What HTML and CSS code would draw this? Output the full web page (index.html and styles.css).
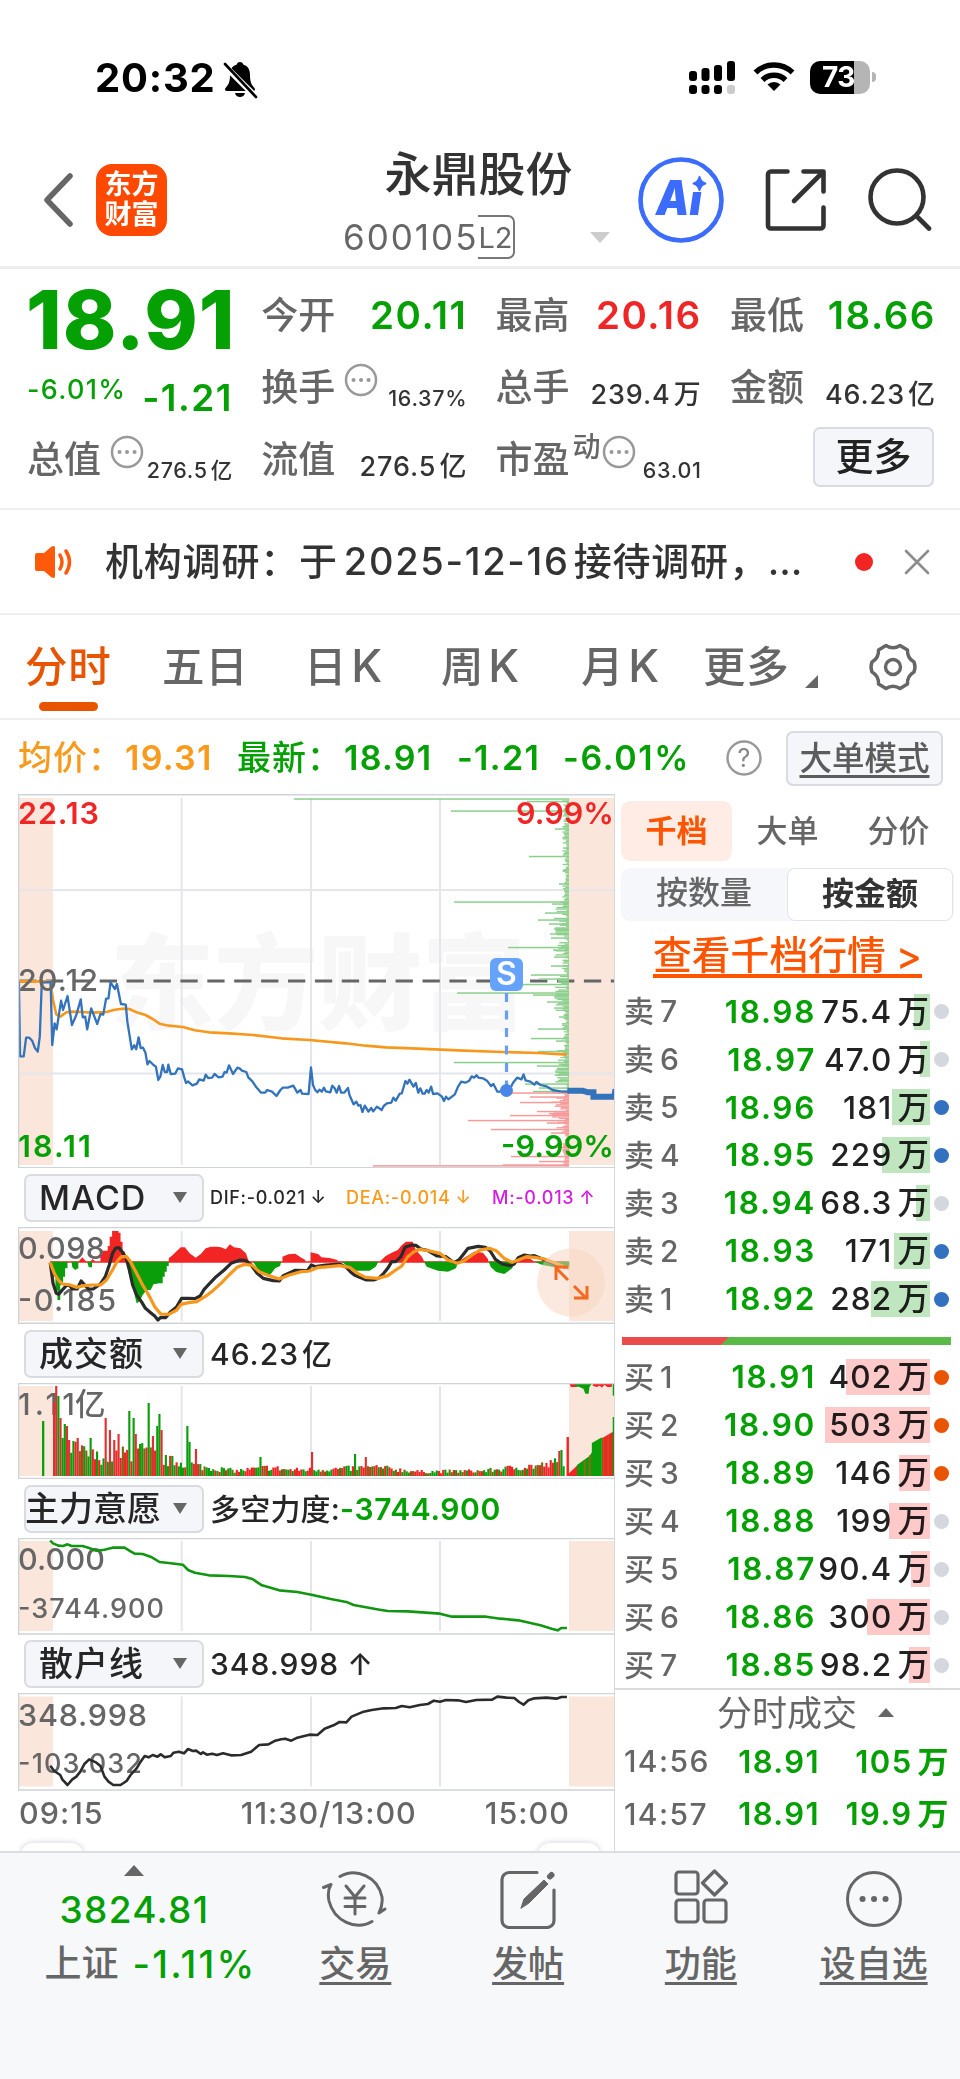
FILE: index.html
```html
<!DOCTYPE html>
<html lang="zh-CN">
<head>
<meta charset="utf-8">
<title>永鼎股份 600105</title>
<link rel="stylesheet" href="styles.css">
</head>
<body>
<div class="status">
  <span class="clock">20:32</span>
  <svg class="bell" width="36" height="38" viewBox="0 0 36 38"><path d="M18 1c-1.800 0-3 1-3.200 2.600C10 5 8 9 8 14c0 8-2 10-4.500 13-1 1.500-.5 3 1.500 3h26c2 0 2.500-1.500 1.500-3C30 24 28 22 28 14c0-5-2-9-6.800-10.400C21 2 19.800 1 18 1z"/><path d="M13 32h10c-.5 2.500-2.500 4-5 4s-4.500-1.500-5-4z"/><path d="M2 4l32 32" stroke="#fff" stroke-width="6"/><path d="M3 3l31 33" stroke="#000" stroke-width="2.600" stroke-linecap="round"/></svg>
  <svg class="signal" width="48" height="34" viewBox="0 0 48 34"><rect x="0" y="10" width="8" height="10" rx="3"/><rect x="12.500" y="7" width="8" height="13" rx="3"/><rect x="25" y="4" width="8" height="16" rx="3"/><rect x="38" y="0" width="8" height="20" rx="3"/><rect x="0" y="24" width="8" height="9" rx="3"/><rect x="12.500" y="24" width="8" height="9" rx="3"/><rect x="25" y="24" width="8" height="9" rx="3"/><rect x="38" y="24" width="8" height="9" rx="3" fill="#ccc"/></svg>
  <svg class="wifi" width="42" height="32" viewBox="0 0 42 32" fill="none" stroke="#000" stroke-width="5.500"><path d="M2.500 11.500a26.500 26.500 0 0 1 37 0"/><path d="M9.500 19a16.500 16.500 0 0 1 23 0"/><path d="M21 30l-6.500-6.500a9.500 9.500 0 0 1 13 0z" fill="#000" stroke="none"/></svg>
  <span class="battery">73</span><i class="nub"></i>
</div>
<header class="top">
  <svg class="back" width="30" height="54" viewBox="0 0 30 54"><path d="M27 3L4 27l23 24" fill="none" stroke="#666" stroke-width="5.500" stroke-linecap="round" stroke-linejoin="round"/></svg>
  <div class="logo"><span>东方</span><span>财富</span></div>
  <div class="stock">
    <div class="name">永鼎股份</div>
    <div class="code"><span>600105</span><b>L2</b><i></i></div>
  </div>
  <div class="ai"><svg width="86" height="86" viewBox="0 0 86 86"><text x="18" y="58" textLength="46" lengthAdjust="spacingAndGlyphs">Ai</text><path d="M52 14h20v21H52z" fill="#fff"/><circle cx="43" cy="43" r="40.500" fill="none" stroke="#3b6cff" stroke-width="4.600"/><path d="M61.500 20q1.200 5.300 6 6.500-4.800 1.200-6 6.500-1.200-5.300-6-6.500 4.800-1.200 6-6.500z" fill="#3b6cff" stroke="#3b6cff" stroke-width="2" stroke-linejoin="round"/></svg></div>
  <svg class="share" width="62" height="62" viewBox="0 0 62 62" fill="none" stroke="#333" stroke-width="4.600" stroke-linecap="round" stroke-linejoin="round"><path d="M22.500 2.500H6a3 3 0 0 0-3 3v51a3 3 0 0 0 3 3h49.500a3 3 0 0 0 3-3V38.500"/><path d="M38.500 2.500h20v20M57.500 3.500L29 32"/></svg>
  <svg class="search" width="64" height="64" viewBox="0 0 64 64" fill="none" stroke="#333" stroke-width="4.600" stroke-linecap="round"><circle cx="29" cy="29" r="26.500"/><path d="M49 48.500l12 12"/></svg>
</header>
<section class="quote">
  <div class="cell big">18.91</div>
  <div class="cell"><label>今开</label><b class="g">20.11</b></div>
  <div class="cell"><label>最高</label><b class="r">20.16</b></div>
  <div class="cell"><label>最低</label><b class="g">18.66</b></div>
  <div class="cell"><span class="pct g">-6.01%</span><b class="chg g">-1.21</b></div>
  <div class="cell"><label>换手</label><svg class="dots" viewBox="0 0 34 34"><circle cx="17" cy="17" r="15"/><path d="M9.500 17h.1M17 17h.1M24.500 17h.1"/></svg><span class="sm">16.37%</span></div>
  <div class="cell"><label>总手</label><span class="md">239.4<s></s>万</span></div>
  <div class="cell"><label>金额</label><span class="md">46.23<s></s>亿</span></div>
  <div class="cell"><label>总值</label><svg class="dots" viewBox="0 0 34 34"><circle cx="17" cy="17" r="15"/><path d="M9.500 17h.1M17 17h.1M24.500 17h.1"/></svg><span class="sm">276.5<s></s>亿</span></div>
  <div class="cell"><label>流值</label><span class="md">276.5<s></s>亿</span></div>
  <div class="cell"><label>市盈</label><sup>动</sup><svg class="dots tight" viewBox="0 0 34 34"><circle cx="17" cy="17" r="15"/><path d="M9.500 17h.1M17 17h.1M24.500 17h.1"/></svg><span class="sm">63.01</span></div>
  <div class="cell end"><button class="more">更多</button></div>
</section>
<section class="notice">
  <svg width="40" height="34" viewBox="0 0 40 34"><path d="M2 10q0-2 2-2h7l7-6q4-2.500 4 1v28q0 3.500-4 1l-7-6H4q-2 0-2-2z" fill="#ff5a0a"/><path d="M27 10q4 7 0 14M33 6q7 11 0 22" fill="none" stroke="#ff5a0a" stroke-width="3.500" stroke-linecap="round"/></svg>
  <p>机构调研：于<span>2025-12-16</span>接待调研，…</p>
  <i class="dot"></i>
  <svg class="x" width="26" height="26" viewBox="0 0 26 26"><path d="M2 2l22 22M24 2L2 24" stroke="#8c8c8c" stroke-width="2.600" stroke-linecap="round"/></svg>
</section>
<nav class="tabs">
  <a class="on">分时</a><a class="t2">五日</a><a class="t3">日<span>K</span></a><a class="t4">周<span>K</span></a><a class="t5">月<span>K</span></a><a class="t6">更多</a>
  <svg class="corner" width="13" height="13" viewBox="0 0 13 13"><path d="M13 0v13H0z" fill="#666"/></svg>
  <svg class="gear" width="50" height="50" viewBox="0 0 50 50" fill="none" stroke="#666" stroke-width="3.400" stroke-linejoin="round"><path d="M18 3.500Q25 8 32 3.500L39.500 8Q39 16 46 20Q48 25 46 30Q39 34 39.500 42L32 46.500Q25 42 18 46.500L10.500 42Q11 34 4 30Q2 25 4 20Q11 16 10.500 8Z"/><circle cx="25" cy="25" r="7.500"/></svg>
</nav>
<section class="info">
  <span class="o">均价：</span><span class="o v1">19.31</span><span class="g lab">最新：</span><span class="g v2">18.91</span><span class="g v3">-1.21</span><span class="g v4">-6.01%</span>
  <svg class="help" width="36" height="36" viewBox="0 0 36 36"><circle cx="18" cy="18" r="16.500" fill="none" stroke="#999" stroke-width="2.400"/><text x="18" y="26.500" text-anchor="middle">?</text></svg>
  <button class="mode"><u>大单模式</u></button>
</section>
<main class="board">
  <div class="charts">
    <svg class="chart" width="598" height="374" viewBox="18 794 598 374">
      <path class="pink" d="M19 798h34v367H19zM569 798h46v367h-46z"/>
      <text class="mark" x="110" y="1022" textLength="416">东方财富</text>
      <path class="grid" d="M181.700 798v367M311 798v367M440 798v367M19 890h596M19 1073.500h596"/>
      <path d="M19 981h596" stroke="#666" stroke-width="3" stroke-dasharray="17.300 9.600" stroke-dashoffset="0"/>
      <g id="depth"></g>
      <g class="crop" transform="translate(0 780) scale(.401786 .333333)">
        <path class="avg" d="M47 604H125L132 660L140 703L150 710L165 697L180 695L205 696L230 698L265 696L285 689L305 686L322 687L340 697L362 705L380 717L397 731L420 737L455 741L485 751L520 757L570 760L630 765L700 775L770 780L860 790L910 797L960 802L1040 806L1140 811L1250 816L1340 819L1411 824"/>
        <path class="price" d="M47 604L50 829H59L65 773H73L80 782L87 804L94 815L99 770L104 608L126 606L130 795L136 730L141 748L152 662L157 690L168 648L179 735L190 705L201 658L206 712L212 710L217 748L227 685L242 732L250 702L257 704L264 656L270 655L275 607L286 627L291 612L301 672L313 674L317 725L328 808L334 796L339 808L345 772L350 804L356 803L362 818L367 853L372 843L382 855L388 860L394 900L399 890L405 855L410 876H416L419 854L425 882L436 881L443 865L453 868L458 890L463 909L468 904L479 916L490 911L496 898L507 902L512 884L518 894L528 893L534 882L544 892L554 890L559 876L564 878L570 856L580 882L591 863L597 866L602 872L613 876L618 892L628 904L638 922L650 938L660 938L665 930L677 935L688 948L698 930L704 923H716L730 917L740 938L748 930L752 941L768 942L774 862L779 915L784 929L790 937L795 929L801 935L806 923L811 934L822 937L827 917L833 925L838 938L844 918L849 938H857L866 924L870 946L880 973L887 965L892 977L897 975L902 996L908 977L917 995L924 984L929 994L938 980L950 990L955 978L963 970L974 968L979 953L985 962L995 941L1000 940L1009 903L1014 911L1019 899L1029 920L1035 909L1041 938L1046 925L1052 941H1057L1062 930L1067 938L1073 920L1078 942L1089 940L1100 950L1105 963L1110 950L1116 958L1132 943L1140 920L1148 905L1158 908L1168 902L1174 889L1180 893L1186 886L1191 893L1202 895L1212 902L1222 918L1228 912L1238 935L1246 935L1262 928L1272 920L1277 908L1287 893L1298 898L1303 883L1308 901L1320 905L1330 914L1335 906L1345 915L1360 919L1375 930L1395 934L1415 935"/>
        <path class="late" d="M1412 932H1450L1463 937H1477V950H1529L1532 928"/>
      </g>
      <path d="M506.500 993v92" stroke="#66a0f5" stroke-width="3.200" stroke-dasharray="9 8.500"/>
      <circle cx="506.500" cy="1090.500" r="6.500" fill="#4a86ea"/>
      <rect x="490" y="958" width="33" height="33" rx="6" fill="#64a2fb"/><text class="s" x="506.500" y="985" text-anchor="middle">S</text>
      <g class="lb"><text class="fr" x="18" y="824" textLength="81">22.13</text><text class="fr" x="516" y="824" textLength="98">9.99%</text><text x="18" y="991" textLength="80">20.12</text><text class="fg" x="18" y="1157" textLength="73">18.11</text><text class="fg" x="501" y="1157" textLength="113">-9.99%</text></g>
      <path class="frame" d="M616 794.800H18.500V1168M18 1167.700h598"/>
    </svg>
    <div class="head"><button class="k">MACD<i></i></button><span class="dif">DIF:-0.021<em>↓</em></span><span class="dea">DEA:-0.014<em>↓</em></span><span class="m">M:-0.013<em>↑</em></span></div>
    <svg class="chart" width="598" height="97" viewBox="18 1227 598 97">
      <path class="pink" d="M19 1231h34v90H19zM569 1231h46v90h-46z"/>
      <path class="grid" d="M181.700 1231v90M311 1231v90M440 1231v90"/>
      <g class="lb"><text x="18" y="1259" textLength="87">0.098</text><text x="18" y="1310.500" textLength="98">-0.185</text></g>
      <g transform="translate(0 1160) scale(.401786 .333333)">
        <path fill="#f22424" d="M125 304H1416V308H125zM195 305l10-13 10 13zM225 305l5-8 8 8zM250 305V285H255V272H268V258H273V230H279V213H295V218H300V245H305V275H311V292H318V305zM420 305V295L430 285L440 273L450 262H460L472 280L487 293L500 282L512 265L525 260H540L550 262L562 268L572 253L582 262L598 265L612 280L618 300L622 305zM703 305V290L718 283L735 281L748 292L760 300V305zM773 305V277L792 282L800 292L820 294L840 300V305zM945 305L960 288L975 278L990 270L998 258L1010 245H1027L1035 270L1050 290L1056 305zM1140 305L1160 290L1180 275L1202 278L1215 298V305zM1282 305L1300 293L1320 296L1330 305z"/>
        <path fill="#0a9f0a" d="M125 305H168V325H162V350H157V375H150V420H143V390H138V350H132V330H125zM178 305H195V325L187 330L180 322zM217 305h12v17h-8zM316 305H420V318H415V335H410V350H405V370H397L382 373L375 390H365L355 405L347 425L340 430L333 395L327 360L320 340zM630 305H700L697 318L685 325L672 345H655L640 325zM850 305H942L935 320L920 332H885L872 325zM1055 305H1140L1135 325L1115 335L1090 332L1062 320zM1216 305H1280L1275 325L1255 342L1235 336L1222 322zM1330 305H1417V322L1380 322L1350 315z"/>
        <path class="dk" d="M125 308L132 370L140 400L146 403L155 390L165 377L172 375L180 387H192L202 363L212 377L220 387H232L250 372L262 350L272 315L280 280L288 264L296 263L305 277L314 295L322 330L330 375L340 405L352 425L362 445L375 458L385 468L393 480L400 472L412 473L425 455L440 440L452 415H468L485 416L498 408L508 388L522 370L538 350L558 330L575 310L598 300L612 302L625 315L640 340L655 355L680 362L695 363L705 347L735 331L765 332L775 315L785 320L810 315L845 312L862 322L872 335L882 345L895 352L912 360H930L942 355L955 340L965 325L975 305L985 305L998 290L1008 262L1025 255L1035 256L1048 267L1065 272L1088 288L1110 290L1130 308L1142 300L1152 285L1165 265L1190 259L1208 262L1220 273L1233 298L1250 312L1270 317L1280 312L1290 293L1305 285L1318 288L1330 287L1350 297L1370 307L1390 317L1416 324"/>
        <path class="avg" d="M125 308L135 340L145 360L155 372L175 375L190 382L210 377L230 375H250L265 360L280 330L292 303L302 290H315L325 305L340 340L355 375L370 405L385 440L400 462L420 463L440 450L450 433L470 428L490 425L510 410L530 392L550 370L570 345L590 322L610 313L628 316L645 335L665 345L695 357L720 345L750 335L770 333L790 323L820 320L845 317L870 322L890 340L910 352L940 355L965 347L985 330L1000 318L1015 290L1030 275L1045 268L1070 273L1095 280L1115 300L1138 310L1155 303L1175 285L1195 270L1218 265L1235 272L1255 295L1275 307L1290 300L1310 290L1330 292L1355 297L1380 308L1400 318L1416 324"/>
      </g>
      <circle cx="571" cy="1282.500" r="34" fill="#f8d3c0" opacity=".5"/>
      <path d="M568 1280l-11-11M556 1280v-13h12M574 1286l12 12M587 1286v12h-13" fill="none" stroke="#f26a21" stroke-width="3"/>
      <path class="frame" d="M18 1227.500h598M18.500 1227v97M18 1323.300h598"/>
    </svg>
    <div class="head"><button class="k">成交额<i></i></button><span class="val">46.23<s></s>亿</span></div>
    <svg class="chart" width="598" height="96" viewBox="18 1383 598 96">
      <path class="pink" d="M19 1386h34v90H19zM569 1386h46v90h-46z"/>
      <path class="grid" d="M181.700 1386v90M311 1386v90M440 1386v90"/>
      <g class="lb"><text x="18" y="1415" textLength="57">1.11</text><text x="75" y="1415">亿</text></g>
      <g id="volume"></g>
      <g transform="translate(0 1160) scale(.401786 .333333)">
        <path fill="#f22424" d="M1416 669h20v12h-15zM1475 669h50l-3 12h-10l-8-6-6 8-5-6-8 4-10-4zM1410 831h6v117h-6zM1416 940l22-25v33h-22zM1498 835l28-20v133h-28z"/>
        <path fill="#0a9f0a" d="M1432 669h43l-8 12-2 20h-8l-5-15-10-5-10-2zM1525 669h7v38h-7zM1436 915l32-28 5-10v-28l25-17v116h-62zM1525 771h7v177h-7z"/>
        <path stroke="#b05a18" stroke-width="4" d="M1455 902v46M1468 886v62M1502 835v113M1514 826v122"/>
      </g>
      <path class="frame" d="M18 1383.500h598M18.500 1382v97M18 1478.500h598"/>
    </svg>
    <div class="head"><button class="k4">主力意愿<i></i></button><span class="val"><q>多空力度:</q><b class="g">-3744.900</b></span></div>
    <svg class="chart" width="598" height="97" viewBox="18 1538 598 97">
      <path class="pink" d="M19 1541h34v90H19zM569 1541h46v90h-46z"/>
      <path class="grid" d="M181.700 1541v90M311 1541v90M440 1541v90"/>
      <g class="lb"><text x="18" y="1570" textLength="87">0.000</text><text class="l26" x="18" y="1618" textLength="146">-3744.900</text></g>
      <g transform="translate(0 1480) scale(.401786 .333333)"><path class="gl" d="M125 182L132 190L145 197L157 198L168 193L178 198H205L220 203L240 212L260 209L280 203L310 203L325 214L335 221L355 222L378 232L397 246L420 249L455 254L468 270L485 278L520 286L570 288L610 291L628 297L652 316L695 331L740 336L775 344L820 356L865 367L880 375L945 389L965 393L1015 394L1095 401L1125 410H1210L1245 416L1290 421L1345 436L1375 447L1388 451L1397 444H1411"/></g>
      <path class="frame" d="M18 1538.500h598M18.500 1537v98M18 1634h598"/>
    </svg>
    <div class="head short"><button class="k">散户线<i></i></button><span class="val">348.998<em>↑</em></span></div>
    <svg class="chart" width="598" height="98" viewBox="18 1693 598 98">
      <path class="pink" d="M19 1696.500h34v90H19zM569 1696.500h46v90h-46z"/>
      <path class="grid" d="M181.700 1696.500v90M311 1696.500v90M440 1696.500v90"/>
      <g class="lb"><text x="18" y="1725.500" textLength="129">348.998</text><text class="l26" x="18" y="1773" textLength="124">-103.032</text></g>
      <g transform="translate(0 1480) scale(.401786 .333333)"><path class="bl" d="M125 857L135 873L150 885L155 898L168 915L180 898L190 890L200 875L210 852L222 838L240 848L250 858L260 890L270 905L282 915H300L315 903L325 885L340 865L350 845L360 828L370 832L380 825L392 830L400 823L410 832L425 828L432 818L445 815L458 820L468 807L480 813L488 812L500 822L505 817L515 824L528 821L540 825L555 820L575 826L600 825L625 815L645 795L668 793L685 782L700 778L710 776L725 782L740 773L770 764L790 765L808 746L830 736L845 726L862 727L875 710L905 695L925 690L955 685L985 684L1000 678L1020 682L1045 675L1065 672L1080 662L1095 665L1110 660L1140 661L1160 666L1185 660L1225 659L1238 650L1260 653L1280 654L1292 666L1303 674L1315 661L1330 655L1360 653L1385 656L1397 651H1411"/></g>
      <path class="frame" d="M18 1693.500h598M18.500 1692v99M18 1790h598"/>
    </svg>
    <div class="axis"><span>09:15</span><span class="mid">11:30/13:00</span><span>15:00</span></div>
    <i class="pill p1"></i><i class="pill p2"></i>
  </div>
  <aside class="book">
    <div class="btabs"><a class="on">千档</a><a>大单</a><a>分价</a></div>
    <div class="seg"><a>按数量</a><a class="on">按金额</a></div>
    <div class="link"><a>查看千档行情 &gt;</a></div>
    <div class="rows sell" id="sell"></div>
    <svg class="ratio" width="329" height="8" viewBox="0 0 329 8"><path d="M0 0h108l-7 8H0z" fill="#ea4b4b"/><path d="M107 0h222v8H99z" fill="#5bb947"/></svg>
    <div class="rows buy" id="buy"></div>
    <div class="deal">分时成交<i></i></div>
    <div class="tick"><span>14:56</span><b>18.91</b><b>105<s></s>万</b></div>
    <div class="tick"><span>14:57</span><b>18.91</b><b>19.9<s></s>万</b></div>
  </aside>
</main>
<footer class="bar">
  <div class="index"><i></i><div class="g n">3824.81</div><div class="ln"><span>上证</span><b class="g">-1.11%</b></div></div>
  <a><svg width="66" height="60" viewBox="0 0 66 60" fill="none" stroke="#666" stroke-width="3" stroke-linecap="round" stroke-linejoin="round"><path d="M18 7.500C34-2 56 8 60 28Q61 36 57 44l6-4"/><path d="M50 52.500C34 62 12 52 7 32Q5 22 9 15.500L1.500 18.500"/><path d="M24 17l9 11 9-11M33 28v17M23 29h20M23 37.500h20"/></svg><u>交易</u></a>
  <a><svg width="58" height="60" viewBox="0 0 58 60" fill="none" stroke="#666" stroke-width="3.200" stroke-linecap="round"><path d="M38 3.500H10a7 7 0 0 0-7 7v41a7 7 0 0 0 7 7h38a7 7 0 0 0 7-7V21"/><path d="M22 39l3-9L45 11l4 4-19 19z" fill="#666" stroke-width="1"/><path d="M51 7.500l1.500-1.500" stroke-width="6"/></svg><u>发帖</u></a>
  <a><svg width="54" height="56" viewBox="0 0 54 56" fill="none" stroke="#666" stroke-width="3.200" stroke-linejoin="round"><rect x="2" y="3" width="22" height="22" rx="3"/><rect x="2" y="31" width="22" height="22" rx="3"/><rect x="30" y="31" width="22" height="22" rx="3"/><path d="M40.500 2L52.500 14 40.500 26 28.500 14z"/></svg><u>功能</u></a>
  <a><svg width="58" height="60" viewBox="0 0 58 60" fill="none" stroke="#666" stroke-width="3"><circle cx="29" cy="30" r="26.500"/><path d="M17.500 30h.1M29 30h.1M40.500 30h.1" stroke-width="6" stroke-linecap="round"/></svg><u>设自选</u></a>
</footer>
<script src="charts.js"></script>
</body>
</html>
```
FILE: styles.css
```css
* { box-sizing: border-box; }
body { margin: 0; width: 960px; height: 2079px; overflow: hidden; background: #fff; color: #333; font-family: "Inter", "Noto Sans CJK SC", sans-serif; font-weight: 500; line-height: 1.2; white-space: nowrap; }
i, em { font-style: normal; }
b { font-weight: 500; }
s { margin-left: 3px; }
q::before, q::after { content: none; }
svg { display: block; flex: none; }
button { font: inherit; color: inherit; padding: 0; background: #f5f6f9; border: 2px solid #d8dbe1; border-radius: 7px; }
.g { color: #04a004; }
.r { color: #f02626; }
.o { color: #f99a1c; }

.status { height: 133px; padding: 57px 0 0 95px; display: flex; align-items: flex-start; }
.status > * { margin-top: 4px; }
.status .clock { margin-top: 0; width: 127px; font-size: 40px; line-height: 42px; font-weight: 700; color: #000; letter-spacing: .8px; }
.signal { margin-left: 431px; }
.wifi { margin-left: 16px; }
.battery { margin-left: 15px; width: 60px; height: 33px; border-radius: 10px; background: linear-gradient(90deg, #000 44px, #b5b5b5 44px); color: #fff; font-size: 28px; font-weight: 700; line-height: 33px; text-align: center; padding-right: 3px; letter-spacing: -.5px; }
.status .nub { margin: 15px 0 0 2px; width: 4px; height: 10px; border-radius: 0 4px 4px 0; background: #b5b5b5; }

.top { height: 136px; padding-left: 43px; display: flex; align-items: center; border-bottom: 3px solid #ededed; }
.logo { margin-left: 23px; width: 71px; height: 72px; border-radius: 16px; background: #ff4800; color: #fff; font-size: 27px; font-weight: 700; line-height: 30px; display: flex; flex-direction: column; align-items: center; justify-content: center; }
.stock { margin-left: 177px; width: 269px; padding-top: 9px; }
.name { font-size: 47px; line-height: 50px; text-align: center; }
.code { margin: 16px 0 0 -1px; height: 44px; display: flex; align-items: center; font-size: 35px; color: #666; font-weight: 400; letter-spacing: 2px; }
.code b { margin-left: 0; width: 37px; height: 44px; line-height: 42px; border: 2px solid #777; border-left: 0; border-radius: 0 7px 7px 0; font-size: 29px; font-weight: 400; letter-spacing: 0; }
.code i { margin-left: 75px; border: 10px solid transparent; border-top: 11px solid #ccc; border-bottom: 0; }
.ai { margin-left: 25px; }
.ai text { font-size: 48px; font-weight: 900; font-style: italic; fill: #3b6cff; }
.share { margin-left: 41px; }
.search { margin-left: 41px; }

.quote { height: 241px; padding: 10px 26px 0 28px; display: grid; grid-template-columns: repeat(4, 205px); column-gap: 29.300px; grid-auto-rows: 72px; border-bottom: 2px solid #efefef; }
.cell { display: flex; align-items: center; justify-content: space-between; }
.cell label, .cell sup { font-size: 37px; color: #666; margin: 3px 0 0 -1px; }
.cell sup { font-size: 28px; margin: 0 0 24px 3px; line-height: 1; vertical-align: baseline; }
.cell b { font-size: 38.500px; letter-spacing: 1.500px; margin-right: 0; font-weight: 600; }
.cell.big { font-size: 81px; font-weight: 800; color: #04a004; margin: 11px 0 0 -2px; letter-spacing: 1px; }
.cell .chg { margin-top: 22px; font-size: 37px; }
.pct { font-size: 27px; margin: 7px 0 0 -1px; letter-spacing: 1.300px; }
.dots { width: 34px; height: 34px; fill: none; stroke: #999; stroke-width: 2.500; stroke-linecap: round; margin: 0 0 14px 9px; }
.dots path { stroke-width: 4; }
.dots.tight { margin-left: 1px; }
.sm { font-size: 21.500px; margin: 23px 0 0 auto; letter-spacing: .7px; }
.md { font-size: 27px; margin-top: 17px; letter-spacing: .9px; }
.end { justify-content: flex-end; }
.more { width: 121px; height: 60px; font-size: 38px; color: #222; margin: 0 2px 4px 0; }

.notice { height: 105px; padding-left: 33px; display: flex; align-items: center; border-bottom: 2px solid #efefef; }
.notice p { margin: 0 0 0 32px; width: 741px; font-size: 38px; letter-spacing: .8px; }
.notice p span { margin: 0 4px 0 6px; letter-spacing: 1.700px; }
.notice .dot { width: 18px; height: 18px; border-radius: 50%; background: #f22424; margin-left: 9px; }
.notice .x { margin-left: 31px; }

.tabs { height: 105px; position: relative; padding-left: 25px; display: flex; align-items: center; font-size: 42.500px; color: #666; letter-spacing: .8px; border-bottom: 2px solid #efefef; }
.tabs .on { color: #e85400; width: 137px; position: relative; }
.tabs .on::after { content: ""; position: absolute; left: 14px; bottom: -19px; width: 59px; height: 9px; border-radius: 5px; background: #e85400; }
.tabs span { font-size: 45px; margin-left: 4px; line-height: 1; }
.t2 { width: 142px; } .t3 { width: 137px; } .t4 { width: 140px; } .t5 { width: 122px; } .t6 { width: 102px; }
.corner { margin-top: 29px; }
.gear { margin-left: 50px; }

.info { height: 74px; padding: 2px 0 0 18px; display: flex; align-items: center; font-size: 34px; }
.info > span { letter-spacing: 1.300px; flex: none; font-weight: 600; }
.info > span:first-child, .info > .lab { font-weight: 500; letter-spacing: 1px; }
.info > span:first-child { width: 107px; }
.v1 { width: 112px; } .lab { width: 107px; } .v2 { width: 113px; } .v3 { width: 106px; } .info > .v4 { width: 163px; letter-spacing: 1.600px; }
.help text { font-size: 25px; fill: #888; font-weight: 400; }
.mode { margin-left: 24px; width: 157px; height: 55px; font-size: 32.500px; color: #5c5c5c; }
.mode u, .bar u { text-decoration-thickness: 3px; text-underline-offset: 5px; }

.board { display: flex; height: 1057px; overflow: hidden; }
.charts { position: relative; margin-left: 18px; width: 598px; border-right: 1.500px solid #d5d8dd; overflow: hidden; }
.pink { fill: #fbe6db; }
.grid { stroke: #e4e6ec; stroke-width: 2; fill: none; }
.frame { stroke: #d0d3d8; stroke-width: 1.600; fill: none; }
.mark { font: 900 104px "Noto Sans CJK SC", sans-serif; fill: #f7f7f8; }
.avg, .price, .late, .dk, .gl, .bl { fill: none; vector-effect: non-scaling-stroke; stroke-linejoin: round; stroke-width: 2.600; }
.avg { stroke: #f7981d; }
.price { stroke: #3373bb; stroke-width: 2.300; }
.late { stroke: #3373bb; stroke-width: 6; stroke-linejoin: miter; }
.dk, .bl { stroke: #2b2b2b; }
.dk, .dk + .avg { stroke-width: 3.200; }
.gl { stroke: #119611; }
.lb { font-size: 30.500px; fill: #666; font-weight: 500; }
.lb .l26 { font-size: 27px; }
.lb .fr { fill: #f02626; } .lb .fg { fill: #04a004; font-weight: 600; }
.lb .fr { font-weight: 600; }
.s { font-size: 32px; fill: #fff; font-weight: 600; }
.head { height: 59px; padding: 0 0 0 6px; display: flex; align-items: center; color: #262626; }
.head.short { height: 58px; }
.head button { position: relative; width: 180px; height: 48px; font-size: 34px; text-align: left; line-height: 44px; flex: none; }
.head button.k { padding-left: 13px; letter-spacing: 1px; }
.head button.k4 { text-indent: -1px; }
.head button i { position: absolute; left: 147px; top: 16px; border: 7px solid transparent; border-top: 11px solid #666; border-bottom: 0; }
.head span { font-size: 18px; margin-left: 6px; letter-spacing: .7px; font-weight: 500; }
.head .dif { width: 129px; margin-left: 6px; } .head .dea { width: 140px; color: #f99a1c; margin-left: 7px; } .m { color: #d41fe0; }
.head em { margin-left: 5px; }
.head .val { font-size: 30px; letter-spacing: 1px; }
.val em { margin-left: 8px; }
.val q { letter-spacing: .2px; }
.val b { font-weight: 600; letter-spacing: .6px; }
.axis { height: 61px; padding: 0 44px 16px 1px; display: flex; align-items: center; justify-content: space-between; font-size: 30.500px; letter-spacing: 1px; color: #666; }
.axis .mid { margin-left: 69px; }
.pill { position: absolute; bottom: -20px; width: 62px; height: 28px; border-radius: 12px; background: #fff; box-shadow: 0 0 6px rgba(0,0,0,.2); }
.p1 { left: 3px; } .p2 { left: 520px; }

.book { flex: 1; height: 1057px; }
.btabs { margin: 7px 6px 0 6px; display: flex; font-size: 31px; color: #666; }
.btabs a { width: 111px; height: 60px; line-height: 60px; text-align: center; border-radius: 9px; }
.btabs .on { background: #ffece4; color: #ff5500; font-weight: 700; }
.seg { margin: 7px 6px 0 6px; height: 53px; display: flex; background: #f6f7fa; border-radius: 9px; font-size: 32px; line-height: 50px; color: #666; }
.seg a { width: 166px; text-align: center; }
.seg .on { border: 1.500px solid #e2e4e8; border-radius: 8px; background: #fff; color: #333; font-weight: 700; }
.link { height: 66.500px; padding-left: 0; text-align: center; line-height: 68px; font-size: 38.800px; color: #ff5500; }
.link a { text-decoration: underline; text-decoration-thickness: 3.500px; text-underline-offset: 5px; }
.rows .row { position: relative; height: 47.980px; display: flex; align-items: center; padding: 0 11px; font-size: 31.500px; }
.rows.buy { margin-top: 8.500px; }
.row label { width: 74px; color: #666; display: flex; gap: 6px; font-size: 30px; margin-left: -2px; }
.row .p { width: 118px; text-align: right; color: #04a004; letter-spacing: 1.700px; font-weight: 600; }
.row .a { flex: 1; text-align: right; color: #222; padding-right: 5px; letter-spacing: 1.200px; display: flex; justify-content: flex-end; }
.row .a u { text-decoration: none; margin-left: 5px; letter-spacing: 0; }
.row .v { position: absolute; right: 30px; top: 6px; height: 36px; background: #c0e6c0; mix-blend-mode: multiply; }
.buy .row .v { background: #fdc9c9; }
.row .d { width: 15px; height: 15px; border-radius: 50%; flex: none; }
.ratio { margin: 13.500px 0 0 7px; }
.deal { height: 47px; border-top: 2px solid #d8dade; margin-top: -1px; padding-left: 102px; display: flex; align-items: center; font-size: 35px; color: #666; font-weight: 400; }
.deal i { margin-left: 21px; border: 8px solid transparent; border-bottom: 9px solid #666; border-top: 0; }
.tick { height: 52.500px; padding: 0 10px 0 9px; display: flex; align-items: center; font-size: 31px; color: #666; letter-spacing: 1.400px; }
.tick span { width: 94px; font-size: 30px; }
.tick b { color: #04a004; width: 102px; text-align: right; font-weight: 600; }
.tick b:last-child { flex: 1; }
.tick s { margin-left: 5px; }

.bar { position: relative; height: 228px; background: #f6f8fa; border-top: 2px solid #dcdee2; display: flex; font-size: 36px; color: #666; }
.index { width: 269px; text-align: center; }
.index i { display: block; width: 0; margin: 12px auto 0; border: 10.500px solid transparent; border-bottom: 11px solid #666; border-top: 0; }
.index .n { margin-top: 12px; line-height: 44px; letter-spacing: 1.300px; font-size: 37px; }
.index .ln { margin-top: 8px; line-height: 48px; display: flex; justify-content: center; gap: 14px; padding-left: 32px; font-size: 37px; }
.ln b { letter-spacing: 2.200px; font-size: 38px; }
.bar > a { width: 172.800px; height: 135px; display: flex; flex-direction: column; align-items: center; justify-content: space-between; padding-top: 16px; }
.bar u { line-height: 48px; }
```
FILE: charts.js
```js
var NS = "http://www.w3.org/2000/svg";
var seed = 7;
function rnd() { seed = (seed * 16807) % 2147483647; return seed / 2147483647; }
function bar(parent, x, y, w, h, fill) {
  var r = document.createElementNS(NS, "rect");
  r.setAttribute("x", x); r.setAttribute("y", y); r.setAttribute("width", w); r.setAttribute("height", h);
  r.setAttribute("fill", fill);
  parent.appendChild(r);
}

/* order depth: [y, length] */
var depth = document.getElementById("depth");
var asks = [[799,275],[801.500,42],[811,118],[829,14],[848,6],[856.500,40],[870,6],[884,10],[902,115],[904,17],[913,24],[920,31],[924,20],[929,15],[934,19],[938,18],[947.500,61],[950,16],[957,15],[966,18],[975,38],[979,30],[984.500,46],[993,112],[995,36],[1002,22],[1008,15],[1017,10],[1029,31],[1038.500,38],[1041,13],[1051.500,31],[1054,18],[1062.500,115],[1066,32],[1075,13],[1084,44],[1088,30],[1091.500,36]];
var bids = [[1093,59],[1097,39],[1102.500,49],[1111.500,32],[1113.500,20],[1115.500,59],[1120.500,101],[1123,22],[1129.500,78],[1133,18],[1147.500,18],[1156.500,58],[1161.500,30],[1165,66],[1165.800,196]];
for (var y = 799; y < 1091; y += 1.350) {
  var dense = y > 900 && y < 955 || y > 975 && y < 1010 || y > 1050;
  var a = 1 + rnd() * (dense ? 14 : 6);
  bar(depth, 569 - a, y, a, 1.350, "#8ccf8c");
}
for (y = 1092; y < 1166; y += 1.350) {
  var l = 2 + rnd() * (y < 1128 ? 16 : 5);
  bar(depth, 569 - l, y, l, 1.350, "#f79a9a");
}
asks.forEach(function (a) { bar(depth, 569 - a[1], a[0] - .7, a[1], 1.500, "#8ccf8c"); });
bids.forEach(function (a) { bar(depth, 569 - a[1], a[0] - .7, a[1], 1.500, "#f79a9a"); });

/* turnover per minute: anchors of [minute, height] */
var vol = document.getElementById("volume");
var env = [[0,70],[3,55],[6,42],[10,30],[20,22],[30,24],[40,30],[52,18],[62,15],[70,10],[85,6],[100,10],[110,7],[130,8],[150,10],[170,5],[200,6],[215,10],[230,13],[240,22]];
var tall = {0:74,1:90,2:80,3:58,5:52,6:50,7:36,11:38,17:38,24:58,26:46,28:36,30:42,35:65,37:58,38:42,44:73,46:40,48:50,49:62,50:46,62:50,63:34,66:27,96:19,120:24,140:22,145:19,235:25,236:26};
var green = {2:1,5:1,17:1,35:1,37:1,44:1,48:1,49:1,62:1,63:1,96:1,140:1,236:1};
bar(vol, 42, 1421, 2.300, 55, "#0a9f0a");
for (var i = 0; i < 238; i++) {
  var k = 0;
  while (k < env.length - 2 && env[k + 1][0] < i) k++;
  var t = (i - env[k][0]) / (env[k + 1][0] - env[k][0]);
  var h = (env[k][1] + t * (env[k + 1][1] - env[k][1])) * (.5 + rnd() * .7);
  var c = rnd();
  var fill = tall[i] ? (green[i] ? "#0a9f0a" : "#e03030") : (c < .4 ? "#0a9f0a" : c < .55 ? "#7a6a10" : "#ee2525");
  h = tall[i] || h;
  bar(vol, 53 + i * 2.150, 1476 - h, 2.150, h, fill);
}

/* order book */
function book(id, tag, rows) {
  document.getElementById(id).innerHTML = rows.map(function (r) {
    return '<div class="row"><label><span>' + tag + "</span><span>" + r[0] + '</span></label><span class="p">' + r[1] +
      '</span><span class="a">' + r[2] + '<u>万</u></span><i class="v" style="width:' + r[3] + 'px"></i><i class="d" style="background:' + r[4] + '"></i></div>';
  }).join("");
}
var grey = "#d4d7dd", blue = "#3171c0", org = "#e85400";
book("sell", "卖", [[7,"18.98","75.4",16,grey],[6,"18.97","47.0",10,grey],[5,"18.96","181",38,blue],[4,"18.95","229",48,blue],[3,"18.94","68.3",14,grey],[2,"18.93","171",36,blue],[1,"18.92","282",59,blue]]);
book("buy", "买", [[1,"18.91","402",84,org],[2,"18.90","503",105,org],[3,"18.89","146",31,org],[4,"18.88","199",41,grey],[5,"18.87","90.4",19,grey],[6,"18.86","300",63,grey],[7,"18.85","98.2",21,grey]]);
```
